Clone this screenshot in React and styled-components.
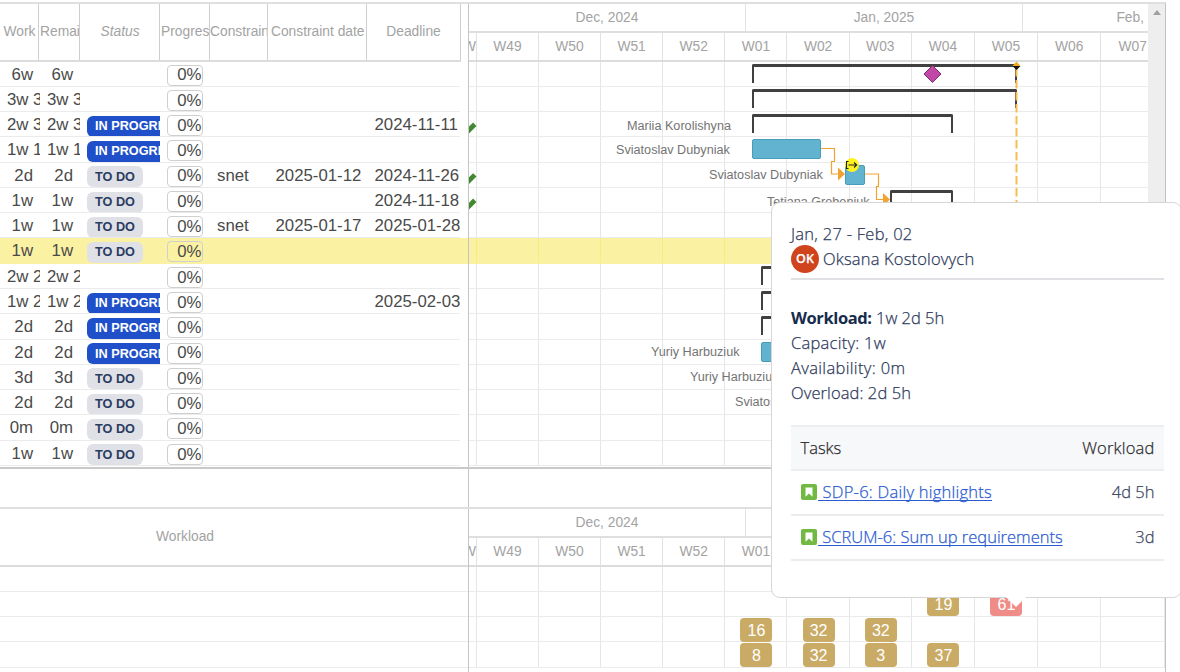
import React from "react";
import styled, { createGlobalStyle } from "styled-components";

const ROW = 25.29;

const GlobalStyle = createGlobalStyle`
  *, *::before, *::after { box-sizing: border-box; }
  html, body { margin: 0; padding: 0; overflow: hidden; background: #fff; }
  body { font-family: "Liberation Sans", Arial, sans-serif; color: #4a4a4a; }
`;

const Page = styled.div`
  position: relative;
  width: 1180px;
  height: 672px;
  padding-top: 2px;
  overflow: hidden;
  display: flex;
  flex-direction: column;
  background: #fff;
`;

const Frame = styled.main`
  width: 1166px;
  flex: 1;
  display: flex;
  flex-direction: column;
  border-top: 2px solid #dfdfdf;
  border-right: 1px solid #c2c2c2;
`;

const TopPane = styled.section`
  height: 465px;
  display: flex;
  overflow: hidden;
  border-bottom: 2px solid #c9c9c9;
`;

const GridPane = styled.div`
  width: 468px;
  flex: none;
`;

const GridHeader = styled.div`
  width: 461px;
  height: 57.5px;
  display: flex;
  border-bottom: 2px solid #dcdcdc;
`;

const HeadCell = styled.div`
  width: ${(p) => p.$w}px;
  flex: none;
  display: flex;
  align-items: center;
  justify-content: ${(p) => p.$align || "center"};
  padding-left: ${(p) => p.$pl || 0}px;
  overflow: hidden;
  white-space: nowrap;
  border-right: 1px solid #cecece;
  color: #a3a3a3;
  font-size: 13.8px;
  font-style: ${(p) => (p.$italic ? "italic" : "normal")};
`;

const GridRow = styled.div`
  width: ${(p) => (p.$hl ? 468 : 460)}px;
  height: ${ROW}px;
  display: flex;
  background: ${(p) => (p.$hl ? "#fbf1a3" : "#fff")};
  border-bottom: 1px solid ${(p) => (p.$hl ? "#fbf1a3" : "#ebebeb")};
`;

const Cell = styled.div`
  width: ${(p) => p.$w}px;
  flex: none;
  padding-left: ${(p) => p.$pl || 7}px;
  padding-right: ${(p) => p.$pr || 0}px;
  overflow: hidden;
  white-space: nowrap;
  text-align: ${(p) => p.$align || "left"};
  font-size: 16.8px;
  line-height: 25.3px;
`;

const Status = styled.span`
  display: inline-flex;
  align-items: center;
  height: 21px;
  margin-top: 3.6px;
  padding: 1px 8px 0;
  border-radius: 6px;
  vertical-align: top;
  font-size: 12.7px;
  font-weight: 700;
  background: ${(p) => (p.$active ? "#1f50c9" : "#dfe1e7")};
  color: ${(p) => (p.$active ? "#fff" : "#2b3c61")};
`;

const ProgressBox = styled.span`
  display: flex;
  align-items: center;
  justify-content: flex-end;
  width: 36px;
  height: 21px;
  margin-top: 3px;
  padding: 0 0.5px 0 0;
  border: 1px solid #cfcfcf;
  border-radius: 4px;
  font-size: 16.8px;
`;

const Chart = styled.div`
  width: ${(p) => p.$w}px;
  flex: none;
  border-left: 1px solid #c4c4c4;
  overflow: hidden;
`;

const MonthRow = styled.div`
  height: 29px;
  display: flex;
  border-bottom: 2px solid #dfdfdf;
`;

const WeekRow = styled.div`
  height: 28.5px;
  display: flex;
  border-bottom: 2px solid #dcdcdc;
`;

const ScaleCell = styled.div`
  width: ${(p) => p.$w}px;
  flex: none;
  display: flex;
  align-items: center;
  justify-content: ${(p) => p.$align || "center"};
  padding-bottom: ${(p) => (p.$week ? 0 : 1)}px;
  padding-top: ${(p) => (p.$week ? 0.6 : 0)}px;
  overflow: hidden;
  white-space: nowrap;
  border-right: 1px solid #e2e2e2;
  color: #a3a3a3;
  font-size: 13.8px;
`;

const Canvas = styled.div`
  position: relative;
`;

const ChartRow = styled.div`
  height: ${ROW}px;
  display: flex;
  background: ${(p) => (p.$hl ? "#fbf1a3" : "#fff")};
  border-bottom: 1px solid ${(p) => (p.$hl ? "#fbf1a3" : "#ebebeb")};
`;

const Slot = styled.div`
  width: ${(p) => p.$w}px;
  flex: none;
  display: flex;
  justify-content: center;
  border-right: 1px solid ${(p) => (p.$hl ? "#fbea80" : "#e6e6e6")};
`;

const Bracket = styled.div`
  position: absolute;
  left: ${(p) => p.$x}px;
  top: ${(p) => p.$row * ROW + 2}px;
  width: ${(p) => p.$w}px;
  height: 19px;
  border: 2px solid #404040;
  border-top-width: 3px;
  border-bottom: 0;
  border-radius: 2px 2px 0 0;
`;

const TaskBar = styled.div`
  position: absolute;
  left: ${(p) => p.$x}px;
  top: ${(p) => p.$row * ROW + 2}px;
  width: ${(p) => p.$w}px;
  height: 20px;
  border: 1px solid #489dba;
  border-radius: 2px;
  background: #62b3d0;
`;

const Assignee = styled.div`
  position: absolute;
  left: ${(p) => p.$x}px;
  top: ${(p) => p.$y - 0.5}px;
  font-size: 12.65px;
  line-height: 16px;
  white-space: nowrap;
  color: #747474;
`;

const Overlay = styled.svg`
  position: absolute;
  left: 0;
  top: -0.5px;
`;

const Scrollbar = styled.div`
  flex: 1;
  display: flex;
  justify-content: center;
  padding-top: 6px;
  background: #eeeeee;
`;

const Toolbar = styled.div`
  height: 40px;
  display: flex;
  border-bottom: 2px solid #dfdfdf;
`;

const ToolbarLeft = styled.div`
  width: 469px;
  border-right: 1px solid #c4c4c4;
`;

const BottomPane = styled.section`
  flex: 1;
  display: flex;
`;

const WorkloadPane = styled.div`
  width: 468px;
  flex: none;
`;

const WorkloadHeader = styled.div`
  height: 57.5px;
  display: flex;
  align-items: center;
  justify-content: center;
  padding-right: 98px;
  border-bottom: 2px solid #dcdcdc;
  color: #a3a3a3;
  font-size: 13.8px;
`;

const EmptyRow = styled.div`
  height: ${ROW}px;
  border-bottom: 1px solid #ebebeb;
`;

const Hours = styled.div`
  width: 32px;
  height: 24px;
  margin: 0.5px 0 0 1px;
  flex: none;
  border-radius: 4px;
  background: ${(p) => (p.$over ? "#f08c88" : "#caab66")};
  color: #fff;
  font-size: 16px;
  line-height: 25px;
  text-align: center;
`;

const Popover = styled.aside`
  position: absolute;
  left: 771px;
  top: 202px;
  width: 411px;
  height: 396px;
  padding: 17.5px 17px 0 19px;
  border: 1px solid #d6d6d6;
  border-radius: 9px;
  background: #fff;
  font-family: "Open Sans", "Noto Sans", sans-serif;
  font-size: 16.5px;
  font-weight: 300;
  -webkit-text-stroke: 0.25px currentColor;
  line-height: 25.3px;
  color: #2e3a5c;
`;

const PopLine = styled.div`
  height: 25.3px;
  white-space: nowrap;
  letter-spacing: ${(p) => p.$ls || 0}px;

  b {
    font-weight: 700;
    letter-spacing: -0.4px;
    color: #172b4d;
    -webkit-text-stroke: 0;
  }
`;

const Person = styled(PopLine)`
  display: flex;
  align-items: center;
  gap: 4px;
`;

const Avatar = styled.span`
  width: 28px;
  height: 28px;
  margin-top: 2px;
  flex: none;
  border-radius: 50%;
  background: #cf431d;
  color: #fff;
  font-size: 12.5px;
  font-weight: 600;
  letter-spacing: 0;
  line-height: 28px;
  text-align: center;
`;

const PopHead = styled.header`
  width: 373px;
  height: 59px;
  border-bottom: 2px solid #dfe1e4;
`;

const Stats = styled.div`
  padding-top: 25px;
  height: 145px;
`;

const TaskTable = styled.div`
  width: 373px;
  border-top: 2px solid #ebedef;
`;

const TaskRow = styled.div`
  height: ${(p) => (p.$head ? 44 : 45)}px;
  display: flex;
  align-items: center;
  justify-content: space-between;
  padding: 0 9.5px;
  border-bottom: 2px solid #ebedef;
  background: ${(p) => (p.$head ? "#f7f8fa" : "#fff")};
  color: ${(p) => (p.$head ? "#2b2b2e" : "#3c4460")};
`;

const TaskLink = styled.a`
  display: flex;
  align-items: center;
  gap: 1.5px;
  color: #2a5bd3;
  white-space: pre;

  span {
    text-decoration: underline;
    text-decoration-thickness: 1px;
    text-decoration-skip-ink: none;
    text-underline-offset: 2px;
    letter-spacing: ${(p) => p.$ls || 0}px;
  }
`;

const Amount = styled.span`
  letter-spacing: ${(p) => p.$ls || 0}px;
`;

const Tail = styled.div`
  position: absolute;
  left: 1006px;
  top: 597px;
  border: 10px solid transparent;
  border-top: 10px solid #fff;
  border-bottom: 0;
`;

const tasks = [
  { work: "6w" },
  { work: "3w 3d" },
  { work: "2w 3d", status: "IN PROGRESS", deadline: "2024-11-11" },
  { work: "1w 1d", status: "IN PROGRESS" },
  { work: "2d", status: "TO DO", type: "snet", date: "2025-01-12", deadline: "2024-11-26" },
  { work: "1w", status: "TO DO", deadline: "2024-11-18" },
  { work: "1w", status: "TO DO", type: "snet", date: "2025-01-17", deadline: "2025-01-28" },
  { work: "1w", status: "TO DO", hl: true },
  { work: "2w 2d" },
  { work: "1w 2d", status: "IN PROGRESS", deadline: "2025-02-03" },
  { work: "2d", status: "IN PROGRESS" },
  { work: "2d", status: "IN PROGRESS" },
  { work: "3d", status: "TO DO" },
  { work: "2d", status: "TO DO" },
  { work: "0m", status: "TO DO" },
  { work: "1w", status: "TO DO" },
];

const weeks = [
  ["W48", 8], ["W49", 62], ["W50", 62], ["W51", 62.2], ["W52", 62.2], ["W01", 62.1],
  ["W02", 62.2], ["W03", 62.3], ["W04", 63], ["W05", 63], ["W06", 63.5], ["W07", 63.5],
];

const months = [["Dec, 2024", 277], ["Jan, 2025", 277], ["Feb, 2025", 250]];

const workload = [
  {},
  { W04: 19, W05: 61 },
  { W01: 16, W02: 32, W03: 32 },
  { W01: 8, W02: 32, W03: 3, W04: 37 },
];

const assignees = [
  ["Mariia Korolishyna", 158, 57],
  ["Sviatoslav Dubyniak", 147, 80.5],
  ["Sviatoslav Dubyniak", 240, 105.5],
  ["Tetiana Grebeniuk", 298, 132.5],
  ["Yuriy Harbuziuk", 182, 282.5],
  ["Yuriy Harbuziuk", 221, 308],
  ["Sviatoslav Dubyniak", 266, 333],
];

function Scale() {
  return (
    <>
      <MonthRow>
        {months.map(([name, w]) => <ScaleCell key={name} $w={w}>{name}</ScaleCell>)}
      </MonthRow>
      <WeekRow>
        {weeks.map(([name, w]) => (
          <ScaleCell key={name} $w={w} $week $align={name === "W48" ? "flex-end" : "center"}>
            {name === "W48" ? "W" : name}
          </ScaleCell>
        ))}
      </WeekRow>
    </>
  );
}

function TaskGrid() {
  return (
    <GridPane>
      <GridHeader>
        <HeadCell $w={39} $pl={1}>Work</HeadCell>
        <HeadCell $w={41} $align="flex-start" $pl={1}>Remaining</HeadCell>
        <HeadCell $w={80} $italic $pl={1}>Status</HeadCell>
        <HeadCell $w={50} $align="flex-start" $pl={1}>Progress</HeadCell>
        <HeadCell $w={58} $align="flex-start">Constraint type</HeadCell>
        <HeadCell $w={99} $pl={1.5}>Constraint date</HeadCell>
        <HeadCell $w={94}>Deadline</HeadCell>
      </GridHeader>
      {tasks.map((t, i) => {
        const long = t.work.length > 2;
        return (
          <GridRow key={i} $hl={t.hl}>
            <Cell $w={40} $align={long ? "left" : "right"} $pr={7}>{t.work}</Cell>
            <Cell $w={40} $align={long ? "left" : "right"} $pr={7}>{t.work}</Cell>
            <Cell $w={80}>
              {t.status && <Status $active={t.status !== "TO DO"}>{t.status}</Status>}
            </Cell>
            <Cell $w={50}><ProgressBox>0%</ProgressBox></Cell>
            <Cell $w={58}>{t.type}</Cell>
            <Cell $w={99} $pl={7.5}>{t.date}</Cell>
            <Cell $w={93} $pl={7.5}>{t.deadline}</Cell>
          </GridRow>
        );
      })}
    </GridPane>
  );
}

function Timeline() {
  return (
    <Chart $w={680}>
      <Scale />
      <Canvas>
        {tasks.map((t, i) => (
          <ChartRow key={i} $hl={t.hl}>
            {weeks.map(([name, w]) => <Slot key={name} $w={w} $hl={t.hl} />)}
          </ChartRow>
        ))}
        {assignees.map(([name, x, y]) => (
          <Assignee key={`${name}${y}`} $x={x} $y={y}>{name}</Assignee>
        ))}
        <Bracket $row={0} $x={283} $w={264.5} />
        <Bracket $row={1} $x={283} $w={264.5} />
        <Bracket $row={2} $x={283} $w={201} />
        <Bracket $row={5} $x={421} $w={63} />
        <Bracket $row={8} $x={292} $w={220} />
        <Bracket $row={9} $x={292} $w={180} />
        <Bracket $row={10} $x={292} $w={140} />
        <TaskBar $row={3} $x={283} $w={69} />
        <TaskBar $row={4} $x={376} $w={20} />
        <TaskBar $row={11} $x={292} $w={60} />
        <Overlay width="679" height="405" viewBox="0 0 679 405" fill="none">
          <path d="M547.5 7V405" stroke="#f8bd50" strokeWidth="2" strokeDasharray="8.5 3.5" />
          <path d="M543.5 5L547.5 0.5L551.5 5Z" fill="#f5a623" />
          <path d="M543.5 5H551.5L547.5 9Z" fill="#111" />
          <path d="M463.5 4.5L472 13L463.5 21.5L455 13Z" fill="#c347a6" stroke="#7d2f6c" />
          <path d="M352 87.5H365.5V100.5H362.5V113H370" stroke="#f5a330" strokeWidth="1.2" />
          <path d="M369 106.5L376 113L369 119.5Z" fill="#f5a330" />
          <path d="M396 113H409.5V125.5H407.5V138.5H415" stroke="#f5a330" strokeWidth="1.2" />
          <path d="M414 132L421 138.5L414 145Z" fill="#f5a330" />
          <circle cx="383" cy="104" r="7" fill="#fff21f" />
          <path d="M379.5 100.5H377.5V107.5H379.5M379.5 104H387.5M385 101.5L387.7 104L385 106.5" stroke="#222" strokeWidth="1.1" />
          {[65.5, 116.2, 141.6].map((y) => (
            <path key={y} d={`M-3 ${y + 6.5}L5.8 ${y - 2.3}`} stroke="#43892f" strokeWidth="4.8" />
          ))}
        </Overlay>
      </Canvas>
    </Chart>
  );
}

function WorkloadChart() {
  return (
    <Chart $w={697}>
      <Scale />
      {workload.map((row, i) => (
        <ChartRow key={i}>
          {weeks.map(([name, w]) => (
            <Slot key={name} $w={w}>
              {row[name] !== undefined && <Hours $over={row[name] > 40}>{row[name]}</Hours>}
            </Slot>
          ))}
        </ChartRow>
      ))}
    </Chart>
  );
}

function StoryIcon() {
  return (
    <svg width="16" height="16" viewBox="0 0 16 16">
      <rect width="16" height="16" rx="2" fill="#72b944" />
      <path d="M4.5 3.5H11.5V12.7L8 9.4L4.5 12.7Z" fill="#fff" />
    </svg>
  );
}

function WorkloadPopover() {
  return (
    <>
      <Popover>
        <PopHead>
          <PopLine $ls={0.27}>Jan, 27 - Feb, 02</PopLine>
          <Person $ls={0.18}><Avatar>OK</Avatar>Oksana Kostolovych</Person>
        </PopHead>
        <Stats>
          <PopLine><b>Workload:</b> 1w 2d 5h</PopLine>
          <PopLine $ls={0.27}>Capacity: 1w</PopLine>
          <PopLine $ls={0.35}>Availability: 0m</PopLine>
          <PopLine $ls={0.1}>Overload: 2d 5h</PopLine>
        </Stats>
        <TaskTable>
          <TaskRow $head><span>Tasks</span><Amount $ls={0.2}>Workload</Amount></TaskRow>
          <TaskRow>
            <TaskLink $ls={0.25}><StoryIcon /><span> SDP-6: Daily highlights</span></TaskLink>
            <Amount>4d 5h</Amount>
          </TaskRow>
          <TaskRow>
            <TaskLink><StoryIcon /><span> SCRUM-6: Sum up requirements</span></TaskLink>
            <Amount>3d</Amount>
          </TaskRow>
        </TaskTable>
      </Popover>
      <Tail />
    </>
  );
}

export default function App() {
  return (
    <Page>
      <GlobalStyle />
      <Frame>
        <TopPane>
          <TaskGrid />
          <Timeline />
          <Scrollbar>
            <svg width="8" height="5" viewBox="0 0 8 5"><path d="M0 5L4 0L8 5Z" fill="#a0a0a0" /></svg>
          </Scrollbar>
        </TopPane>
        <Toolbar><ToolbarLeft /></Toolbar>
        <BottomPane>
          <WorkloadPane>
            <WorkloadHeader>Workload</WorkloadHeader>
            {workload.map((_, i) => <EmptyRow key={i} />)}
          </WorkloadPane>
          <WorkloadChart />
        </BottomPane>
      </Frame>
      <WorkloadPopover />
    </Page>
  );
}
